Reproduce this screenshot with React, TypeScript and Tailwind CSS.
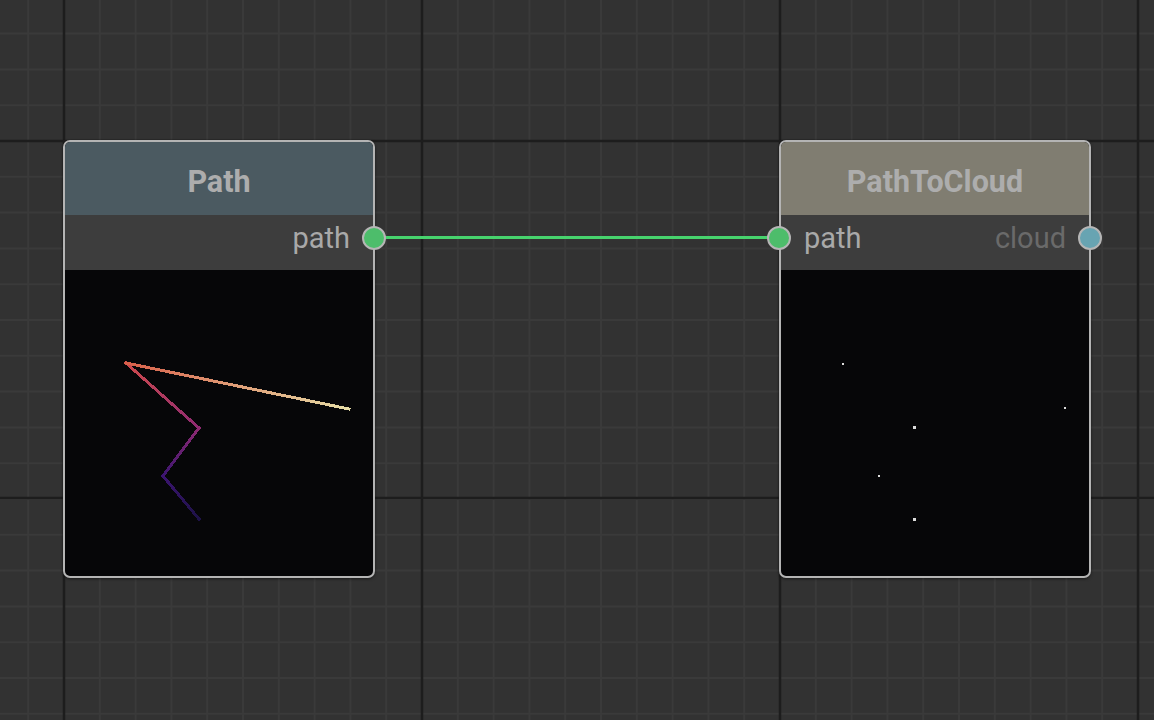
import React from "react";

type Port = { label: string; color: string; dim?: boolean };

interface NodeProps {
	left: string;
	title: string;
	headerBg: string;
	input?: Port;
	output?: Port;
	children?: React.ReactNode;
}

const Dot = ({ color, side }: { color: string; side: "left" | "right" }) => (
	<span
		className={`absolute top-[11px] h-6 w-6 rounded-full border-2 border-[#b6b6b6] ${
			side === "left" ? "-left-[14px]" : "-right-[13px]"
		}`}
		style={{ backgroundColor: color }}
	/>
);

const Node = ({ left, title, headerBg, input, output, children }: NodeProps) => {
	return (
		<div
			className={`absolute top-[140px] ${left} flex h-[438px] w-[312px] flex-col rounded-[7px] border-2 border-[#b4b4b4] bg-[#060608] shadow-[0_1px_3px_rgba(0,0,0,0.5)]`}
		>
			<div
				className={`flex h-[73px] items-center justify-center rounded-t-[5px] pt-[6px] text-[30.5px] font-bold text-[#adadad] ${headerBg}`}
			>
				{title}
			</div>
			<div className="relative flex h-[55px] items-center justify-between bg-[#3d3d3d] px-[23px] pb-[8px] text-[29px] text-[#a9a9a9]">
				<span>{input?.label}</span>
				<span className={output?.dim ? "text-[#6a6a6a]" : ""}>{output?.label}</span>
				{input && <Dot color={input.color} side="left" />}
				{output && <Dot color={output.color} side="right" />}
			</div>
			<div className="relative flex-1 overflow-hidden rounded-b-[5px]">{children}</div>
		</div>
	);
};

// magma-ish coloured polyline, drawn pixel sharp
const PathPreview = () => {
	const pts: [number, number, string][] = [
		[134, 249, "#1d1247"],
		[98, 206, "#3b1470"],
		[134, 158, "#8e2a72"],
		[61, 93, "#cf4a4c"],
		[284, 139, "#e6dca6"],
	];
	return (
		<svg className="absolute inset-0" width="308" height="306" shapeRendering="crispEdges">
			<defs>
				{pts.slice(0, -1).map((p, i) => {
					const q = pts[i + 1];
					return (
						<linearGradient
							key={i}
							id={`seg${i}`}
							gradientUnits="userSpaceOnUse"
							x1={p[0]}
							y1={p[1]}
							x2={q[0]}
							y2={q[1]}
						>
							<stop offset="0" stopColor={i === 3 ? "#d8604a" : p[2]} />
							<stop offset="1" stopColor={q[2]} />
						</linearGradient>
					);
				})}
			</defs>
			{pts.slice(0, -1).map((p, i) => {
				const q = pts[i + 1];
				return (
					<line
						key={i}
						x1={p[0]}
						y1={p[1]}
						x2={q[0]}
						y2={q[1]}
						stroke={`url(#seg${i})`}
						strokeWidth={3}
						strokeLinecap="square"
					/>
				);
			})}
		</svg>
	);
};

const CloudPreview = () => {
	const pts: [number, number, number][] = [
		[62, 94, 2],
		[284, 138, 2],
		[133, 157, 3],
		[98, 206, 2],
		[133, 249, 3],
	];
	return (
		<svg className="absolute inset-0" width="308" height="306" shapeRendering="crispEdges">
			{pts.map(([x, y, s], i) => (
				<rect key={i} x={x - 1} y={y - 1} width={s} height={s === 3 ? 2.5 : 2} fill="#dcdcdc" />
			))}
		</svg>
	);
};

const Grid = () => {
	const minor = 35.8;
	const xs = Array.from({ length: 34 }, (_, i) => 64 - minor * 2 + i * minor);
	const ys = Array.from({ length: 24 }, (_, i) => 141 - minor * 4 + i * minor);
	const majorX = [64, 422, 780, 1138];
	const majorY = [141, 498];
	return (
		<svg className="absolute inset-0" width="1154" height="720">
			{xs.map((x, i) => (
				<line key={`x${i}`} x1={x} y1={0} x2={x} y2={720} stroke="#3a3a3a" strokeWidth={2} />
			))}
			{ys.map((y, i) => (
				<line key={`y${i}`} x1={0} y1={y} x2={1154} y2={y} stroke="#3a3a3a" strokeWidth={2} />
			))}
			{majorX.map((x) => (
				<line key={`mx${x}`} x1={x} y1={0} x2={x} y2={720} stroke="#1d1d1d" strokeWidth={2.5} />
			))}
			{majorY.map((y) => (
				<line key={`my${y}`} x1={0} y1={y} x2={1154} y2={y} stroke="#1d1d1d" strokeWidth={2.5} />
			))}
		</svg>
	);
};

export default function App() {
	return (
		<div className="relative h-[720px] w-[1154px] overflow-hidden bg-[#323232] font-['Roboto',sans-serif]">
			<Grid />
			<svg className="absolute inset-0" width="1154" height="720">
				<line x1={374} y1={237.5} x2={780} y2={237.5} stroke="#47d36d" strokeWidth={3} />
			</svg>
			<Node
				left="left-[63px]"
				title="Path"
				headerBg="bg-[#4b5a61]"
				output={{ label: "path", color: "#4dbd6b" }}
			>
				<PathPreview />
			</Node>
			<Node
				left="left-[779px]"
				title="PathToCloud"
				headerBg="bg-[#807d71]"
				input={{ label: "path", color: "#4dbd6b" }}
				output={{ label: "cloud", color: "#68a4b2", dim: true }}
			>
				<CloudPreview />
			</Node>
		</div>
	);
}
